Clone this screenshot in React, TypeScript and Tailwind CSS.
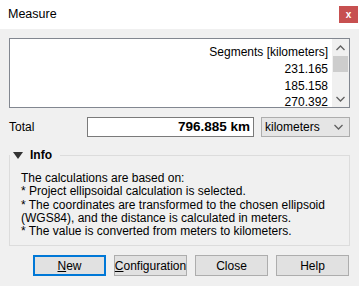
import React from "react";

const font = { fontFamily: '"Liberation Sans", Arial, sans-serif' };

function Chevron({ dir }: { dir: "up" | "down" }) {
  return (
    <svg width="9" height="6" viewBox="0 0 9 6" className="block">
      {dir === "up" ? (
        <path d="M0.5 5 L4.5 1 L8.5 5" fill="none" stroke="#606060" strokeWidth="1.3" />
      ) : (
        <path d="M0.5 1 L4.5 5 L8.5 1" fill="none" stroke="#606060" strokeWidth="1.3" />
      )}
    </svg>
  );
}

function Btn({ children, primary }: { children: React.ReactNode; primary?: boolean }) {
  return (
    <div
      className={
        "w-[73px] h-[21px] flex items-center justify-center text-[12px] text-black bg-[#e1e1e1] " +
        (primary ? "border-2 border-[#0078d7]" : "border border-[#adadad]")
      }
    >
      {children}
    </div>
  );
}

export default function App() {
  return (
    <div className="w-[359px] h-[286px] flex flex-col bg-[#f0f0f0] overflow-hidden" style={font}>
      <div className="h-[29px] bg-white flex items-center justify-between pl-[8px] pr-[1px] shrink-0">
        <span className="text-[12.5px] text-black">Measure</span>
        <div className="w-[19px] h-[17px] bg-[#c75050] flex items-center justify-center text-white text-[10px] font-bold leading-none">
          x
        </div>
      </div>
      <div className="flex-1 flex flex-col px-[9px] pt-[9px]">
        <div className="h-[70px] w-[341px] border border-[#828790] bg-white flex">
          <div className="flex-1 flex flex-col items-end pt-[5px] pr-[4px] text-[12px] text-black overflow-hidden">
            <div className="h-[17px] leading-[17px]">Segments [kilometers]</div>
            <div className="h-[17px] leading-[17px]">231.165</div>
            <div className="h-[17px] leading-[17px]">185.158</div>
            <div className="h-[15px] leading-[15px]">270.392</div>
          </div>
          <div className="w-[17px] flex flex-col bg-[#f0f0f0]">
            <div className="h-[17px] flex items-center justify-center">
              <Chevron dir="up" />
            </div>
            <div className="h-[16px] mx-[1px] bg-[#cdcdcd]" />
            <div className="flex-1" />
            <div className="h-[17px] flex items-center justify-center">
              <Chevron dir="down" />
            </div>
          </div>
        </div>
        <div className="mt-[9px] h-[20px] flex items-center">
          <span className="w-[78px] text-[12px] text-black">Total</span>
          <div className="w-[167px] h-[20px] border border-[#7a7a7a] bg-white flex items-center justify-end pr-[3px] text-[13.5px] font-bold text-black">
            796.885 km
          </div>
          <div className="ml-[7px] w-[89px] h-[20px] border border-[#adadad] bg-[#e5e5e5] flex items-center justify-between pl-[3px] pr-[6px] text-[12px] text-black">
            <span>kilometers</span>
            <Chevron dir="down" />
          </div>
        </div>
        <fieldset className="mt-[9px] w-[341px] h-[100px] border border-[#dcdcdc] m-0 p-0">
          <legend className="pl-[3px] pr-[8px] flex items-center gap-[7px] text-[12px] font-bold text-black">
            <svg width="10" height="7" viewBox="0 0 10 7">
              <path d="M0 0 L10 0 L5 7 Z" fill="#333" />
            </svg>
            <span>Info</span>
          </legend>
          <div className="pl-[11px] pt-[8px] text-[12px] leading-[13.3px] text-black">
            <div>The calculations are based on:</div>
            <div>* Project ellipsoidal calculation is selected.</div>
            <div>* The coordinates are transformed to the chosen ellipsoid</div>
            <div>(WGS84), and the distance is calculated in meters.</div>
            <div>* The value is converted from meters to kilometers.</div>
          </div>
        </fieldset>
        <div className="mt-[9px] flex justify-end gap-[8px] pr-[1px]">
          <Btn primary>
            <span>
              <span className="underline">N</span>ew
            </span>
          </Btn>
          <Btn>
            <span>
              <span className="underline">C</span>onfiguration
            </span>
          </Btn>
          <Btn>Close</Btn>
          <Btn>Help</Btn>
        </div>
      </div>
    </div>
  );
}
